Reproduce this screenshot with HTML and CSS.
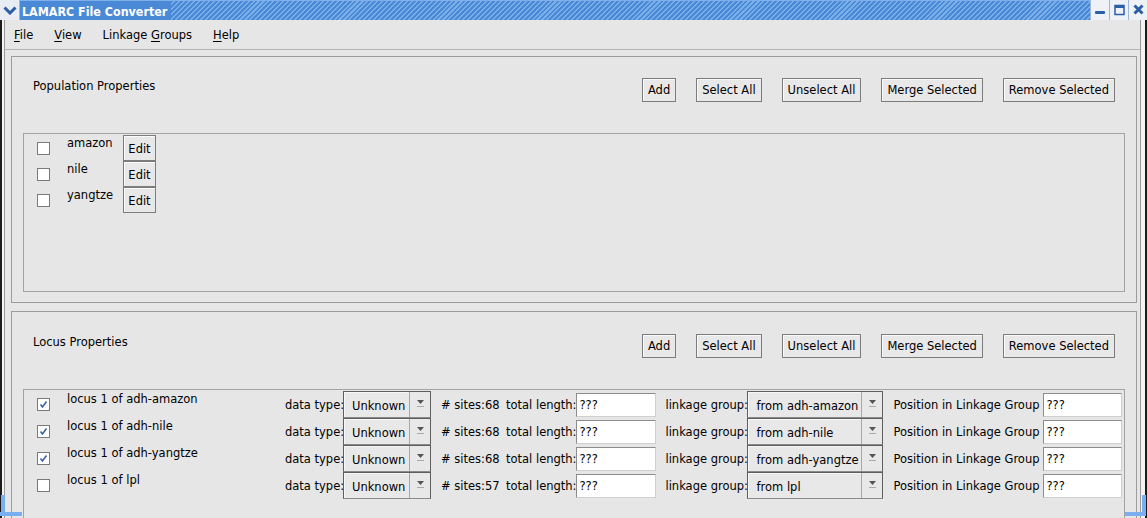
FILE: index.html
```html
<!DOCTYPE html>
<html>
<head>
<meta charset="utf-8">
<title>LAMARC File Converter</title>
<link rel="stylesheet" href="styles.css">
</head>
<body>
<div class="window">
  <div class="titlebar">
    <div class="tb-menu">
      <svg width="14" height="9" viewBox="0 0 14 9"><path d="M1.5 1.5 L7 7 L12.5 1.5" fill="none" stroke="#2a5ea6" stroke-width="3"/></svg>
    </div>
    <div class="tb-title">LAMARC File Converter</div>
    <div class="tb-hatch"></div>
    <div class="tb-btns">
      <div class="tb-btn"><svg width="11" height="12" viewBox="0 0 11 12"><rect x="0" y="7" width="10" height="3" rx="1" fill="#2a5ea6"/></svg></div>
      <div class="tb-btn"><svg width="11" height="12" viewBox="0 0 11 12"><rect x="1" y="1.5" width="9" height="9" fill="none" stroke="#2a5ea6" stroke-width="1.5"/><rect x="1" y="1" width="9" height="3" fill="#2a5ea6"/></svg></div>
      <div class="tb-btn"><svg width="11" height="12" viewBox="0 0 11 12"><path d="M1.5 1.5 L9.5 9.5 M9.5 1.5 L1.5 9.5" stroke="#2a5ea6" stroke-width="3"/></svg></div>
    </div>
  </div>
  <div class="frame">
    <div class="inner">
      <div class="menubar">
        <span class="menu"><u>F</u>ile</span>
        <span class="menu"><u>V</u>iew</span>
        <span class="menu">Linkage <u>G</u>roups</span>
        <span class="menu"><u>H</u>elp</span>
      </div>
      <div class="content">
        <section class="panel">
          <div class="panel-head">
            <div class="panel-title">Population Properties</div>
            <div class="btn-row">
              <button class="btn">Add</button>
              <button class="btn">Select All</button>
              <button class="btn">Unselect All</button>
              <button class="btn">Merge Selected</button>
              <button class="btn">Remove Selected</button>
            </div>
          </div>
          <div class="list pop-list">
            <div class="pop-row"><span class="cb"></span><span class="pop-name">amazon</span><button class="btn edit">Edit</button></div>
            <div class="pop-row"><span class="cb"></span><span class="pop-name">nile</span><button class="btn edit">Edit</button></div>
            <div class="pop-row"><span class="cb"></span><span class="pop-name">yangtze</span><button class="btn edit">Edit</button></div>
          </div>
        </section>
        <section class="panel locus">
          <div class="panel-head locus-head">
            <div class="panel-title">Locus Properties</div>
            <div class="btn-row">
              <button class="btn">Add</button>
              <button class="btn">Select All</button>
              <button class="btn">Unselect All</button>
              <button class="btn">Merge Selected</button>
              <button class="btn">Remove Selected</button>
            </div>
          </div>
          <div class="list locus-list">
            <div class="locus-row">
              <span class="cb"><svg width="11" height="11" viewBox="0 0 11 11"><path d="M2.5 5.5 L4.5 8 L8.5 2.5" fill="none" stroke="#3d5eab" stroke-width="1.6"/></svg></span>
              <span class="locus-name">locus 1 of adh-amazon</span>
              <span class="lbl w-dt">data type:</span>
              <div class="combo c-dt"><span class="combo-val">Unknown</span><span class="combo-arrow"><svg width="7" height="8" viewBox="0 0 7 8"><path d="M0 0 H7 L3.5 4 Z" fill="#555"/><rect x="0" y="6" width="7" height="1" fill="#aaa"/></svg></span></div>
              <span class="lbl w-sites">#&nbsp;sites:68</span>
              <span class="lbl w-tl">total length:</span>
              <input class="field f-tl" value="???">
              <span class="lbl w-lg">linkage group:</span>
              <div class="combo c-lg"><span class="combo-val">from adh-amazon</span><span class="combo-arrow"><svg width="7" height="8" viewBox="0 0 7 8"><path d="M0 0 H7 L3.5 4 Z" fill="#555"/><rect x="0" y="6" width="7" height="1" fill="#aaa"/></svg></span></div>
              <span class="lbl w-pos">Position in Linkage Group</span>
              <input class="field f-pos" value="???">
            </div>
            <div class="locus-row">
              <span class="cb"><svg width="11" height="11" viewBox="0 0 11 11"><path d="M2.5 5.5 L4.5 8 L8.5 2.5" fill="none" stroke="#3d5eab" stroke-width="1.6"/></svg></span>
              <span class="locus-name">locus 1 of adh-nile</span>
              <span class="lbl w-dt">data type:</span>
              <div class="combo c-dt"><span class="combo-val">Unknown</span><span class="combo-arrow"><svg width="7" height="8" viewBox="0 0 7 8"><path d="M0 0 H7 L3.5 4 Z" fill="#555"/><rect x="0" y="6" width="7" height="1" fill="#aaa"/></svg></span></div>
              <span class="lbl w-sites">#&nbsp;sites:68</span>
              <span class="lbl w-tl">total length:</span>
              <input class="field f-tl" value="???">
              <span class="lbl w-lg">linkage group:</span>
              <div class="combo c-lg"><span class="combo-val">from adh-nile</span><span class="combo-arrow"><svg width="7" height="8" viewBox="0 0 7 8"><path d="M0 0 H7 L3.5 4 Z" fill="#555"/><rect x="0" y="6" width="7" height="1" fill="#aaa"/></svg></span></div>
              <span class="lbl w-pos">Position in Linkage Group</span>
              <input class="field f-pos" value="???">
            </div>
            <div class="locus-row">
              <span class="cb"><svg width="11" height="11" viewBox="0 0 11 11"><path d="M2.5 5.5 L4.5 8 L8.5 2.5" fill="none" stroke="#3d5eab" stroke-width="1.6"/></svg></span>
              <span class="locus-name">locus 1 of adh-yangtze</span>
              <span class="lbl w-dt">data type:</span>
              <div class="combo c-dt"><span class="combo-val">Unknown</span><span class="combo-arrow"><svg width="7" height="8" viewBox="0 0 7 8"><path d="M0 0 H7 L3.5 4 Z" fill="#555"/><rect x="0" y="6" width="7" height="1" fill="#aaa"/></svg></span></div>
              <span class="lbl w-sites">#&nbsp;sites:68</span>
              <span class="lbl w-tl">total length:</span>
              <input class="field f-tl" value="???">
              <span class="lbl w-lg">linkage group:</span>
              <div class="combo c-lg"><span class="combo-val">from adh-yangtze</span><span class="combo-arrow"><svg width="7" height="8" viewBox="0 0 7 8"><path d="M0 0 H7 L3.5 4 Z" fill="#555"/><rect x="0" y="6" width="7" height="1" fill="#aaa"/></svg></span></div>
              <span class="lbl w-pos">Position in Linkage Group</span>
              <input class="field f-pos" value="???">
            </div>
            <div class="locus-row">
              <span class="cb"></span>
              <span class="locus-name">locus 1 of lpl</span>
              <span class="lbl w-dt">data type:</span>
              <div class="combo c-dt"><span class="combo-val">Unknown</span><span class="combo-arrow"><svg width="7" height="8" viewBox="0 0 7 8"><path d="M0 0 H7 L3.5 4 Z" fill="#555"/><rect x="0" y="6" width="7" height="1" fill="#aaa"/></svg></span></div>
              <span class="lbl w-sites">#&nbsp;sites:57</span>
              <span class="lbl w-tl">total length:</span>
              <input class="field f-tl" value="???">
              <span class="lbl w-lg">linkage group:</span>
              <div class="combo c-lg"><span class="combo-val">from lpl</span><span class="combo-arrow"><svg width="7" height="8" viewBox="0 0 7 8"><path d="M0 0 H7 L3.5 4 Z" fill="#555"/><rect x="0" y="6" width="7" height="1" fill="#aaa"/></svg></span></div>
              <span class="lbl w-pos">Position in Linkage Group</span>
              <input class="field f-pos" value="???">
            </div>
          </div>
        </section>
      </div>
    </div>
  </div>
  <div class="grip grip-bl"></div>
  <div class="grip grip-br"></div>
</div>
</body>
</html>
```

FILE: styles.css
```css
* { box-sizing: border-box; }
html, body { margin: 0; padding: 0; background: #000; }
body { font-family: "DejaVu Sans", "Noto Sans", sans-serif; font-size: 11.5px; color: #000; }

.window {
  position: relative;
  width: 1147px;
  height: 518px;
  overflow: hidden;
  display: flex;
  flex-direction: column;
  background: #1c1c1c;
}

/* title bar */
.titlebar {
  height: 20px;
  display: flex;
  background: #4a89d6;
  border-top: 1px solid #7fb0ea;
  flex-shrink: 0;
}
.tb-menu {
  width: 20px;
  margin-top: -1px;
  height: 20px;
  background: #e9edf3;
  border-right: 1px solid #9eb7d6;
  display: flex;
  align-items: center;
  justify-content: center;
}
.tb-title {
  color: #fff;
  font-family: "DejaVu Sans Condensed", "DejaVu Sans", sans-serif;
  font-stretch: condensed;
  font-weight: bold;
  font-size: 12.4px;
  line-height: 19px;
  padding: 1px 4px 0 2px;
  white-space: nowrap;
}
.tb-hatch {
  flex: 1;
  background: repeating-linear-gradient(135deg, #4a89d6 0px, #4a89d6 2px, #7aaee8 2px, #7aaee8 3.5px);
}
.tb-btns { display: flex; margin-top: -1px; }
.tb-btn {
  width: 19px;
  height: 20px;
  background: #eef1f5;
  border-left: 1px solid #9eb7d6;
  display: flex;
  align-items: center;
  justify-content: center;
}

/* frame */
.frame {
  flex: 1;
  border-left: 2px solid #1c1c1c;
  border-right: 2px solid #1c1c1c;
  border-bottom: 2px solid #1c1c1c;
  background: #f3f3f3;
  padding: 0 4px 4px 2px;
  display: flex;
}
.inner {
  flex: 1;
  border-left: 1px solid #999;
  border-right: 1px solid #999;
  border-bottom: 1px solid #999;
  background: #e6e6e6;
  overflow: hidden;
  display: flex;
  flex-direction: column;
}

.menubar {
  height: 30px;
  border-bottom: 1px solid #b4b4b4;
  display: flex;
  align-items: center;
  padding: 1px 0 0 9px;
  flex-shrink: 0;
}
.menu { margin-right: 21px; white-space: nowrap; }
.menu u { text-decoration-thickness: 1px; text-underline-offset: 2px; }

.content {
  padding: 6px 3px 0 6px;
  display: flex;
  flex-direction: column;
  gap: 8px;
}

.panel {
  border: 1px solid #9c9c9c;
  display: flex;
  flex-direction: column;
  padding: 0 11px 10px 11px;
  flex-shrink: 0;
}
.panel-head {
  display: flex;
  justify-content: space-between;
  align-items: flex-start;
  padding: 21px 10px 31px 10px;
}
.locus-head { padding-top: 22px; }
.panel-title { line-height: 14px; margin-top: 1px; }
.btn-row { display: flex; gap: 20px; }

.btn {
  font-family: inherit;
  font-size: 11.5px;
  color: #000;
  height: 24px;
  padding: 0 5px;
  margin: 0;
  background: #e8e8e8;
  border: 1px solid #7c7c7c;
  box-shadow: inset 1px 1px 0 #fafafa;
  border-radius: 0;
  white-space: nowrap;
}

.list {
  border: 1px solid #a3a3a3;
  padding: 1px 0 0 13px;
}
.pop-list { height: 159px; }
.locus-list { height: 159px; }

.pop-row { display: flex; align-items: flex-start; height: 26px; }
.cb {
  width: 13px;
  height: 13px;
  border: 1px solid #7a7a7a;
  background: #fff;
  margin-top: 7px;
  display: flex;
  align-items: center;
  justify-content: center;
  flex-shrink: 0;
}
.pop-name { margin-left: 17px; width: 56px; line-height: 14px; margin-top: 1px; }
.edit { height: 26px; width: 33px; padding: 0 4px; padding-top: 2px; }

.locus-row { display: flex; align-items: center; height: 27px; }
.locus-row .cb { align-self: flex-start; }
.locus-name { margin-left: 17px; width: 218px; align-self: flex-start; line-height: 14px; margin-top: 1px; white-space: nowrap; }
.lbl { white-space: nowrap; flex-shrink: 0; }
.w-dt { width: 58px; }
.w-sites { width: 65px; margin-left: 10px; }
.w-lg { width: 82px; margin-left: 9px; }
.w-pos { width: 150px; margin-left: 10px; }

.combo {
  height: 27px;
  display: flex;
  border: 1px solid #5e5e5e;
  border-bottom-color: #8a8a8a;
  background: #e8e8e8;
  flex-shrink: 0;
}
.c-dt { width: 88px; }
.c-lg { width: 136px; }
.combo-val {
  flex: 1;
  padding-left: 8px;
  padding-top: 2px;
  display: flex;
  align-items: center;
  white-space: nowrap;
  box-shadow: inset 1px 1px 0 #f8f8f8;
}
.combo-arrow {
  width: 21px;
  border-left: 1px solid #a8a8a8;
  display: flex;
  align-items: center;
  justify-content: center;
  padding-bottom: 2px;
}

.field {
  font-family: inherit;
  font-size: 11.5px;
  height: 24px;
  margin: 1px 0 0 0;
  padding: 0 0 0 2px;
  background: #fff;
  border: 1px solid;
  border-color: #8c8c8c #cfcfcf #cfcfcf #8c8c8c;
  border-radius: 0;
  color: #000;
  outline: none;
  flex-shrink: 0;
}
.f-tl { width: 80px; }
.f-pos { width: 79px; }

.grip { position: absolute; background: #79aef0; }
.grip-bl { left: 0; bottom: 2px; width: 22px; height: 4px; }
.grip-bl::before { content: ""; position: absolute; left: 1px; bottom: 0; width: 4px; height: 21px; background: #79aef0; }
.grip-br { right: 1px; bottom: 2px; width: 21px; height: 4px; }
.grip-br::before { content: ""; position: absolute; right: 0; bottom: 0; width: 4px; height: 21px; background: #79aef0; }
```
